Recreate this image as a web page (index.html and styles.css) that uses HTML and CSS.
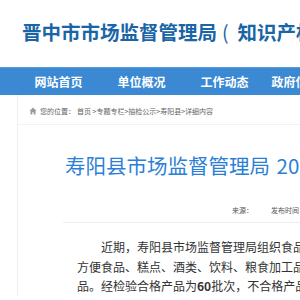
FILE: index.html
```html
<!DOCTYPE html>
<html lang="zh-CN">
<head>
    <meta charset="UTF-8">
    <meta name="viewport" content="width=device-width, initial-scale=1.0">
    <title>寿阳县市场监督管理局 详细内容</title>
    <link rel="stylesheet" href="styles.css">
</head>
<body>
    <!-- Header -->
    <header class="site-header">
        <h1 class="site-title">晋中市市场监督管理局<span class="paren">(</span>知识产权局)</h1>
    </header>

    <!-- Main Nav -->
    <nav class="main-nav">
        <ul>
            <li><a href="#">网站首页</a></li>
            <li><a href="#">单位概况</a></li>
            <li><a href="#">工作动态</a></li>
            <li><a href="#">政府信息公开</a></li>
        </ul>
    </nav>

    <!-- Page -->
    <div class="page">
        <div class="crumbs">
            <svg class="home-icon" width="8" height="8" viewBox="0 0 8 8">
                <path d="M4 0.5 L0.5 4 H1.5 V7.5 H3.3 V5.3 H4.7 V7.5 H6.5 V4 H7.5 Z" fill="#9a9a9a"/>
            </svg>
            <span>您的位置：</span>
            <a class="crumb-home" href="#">首页</a>
            <span>&nbsp;&gt;<a href="#">专题专栏</a>&gt;<a href="#">抽检公示</a>&gt;<a href="#">寿阳县</a>&gt;详细内容</span>
        </div>

        <article class="article">
            <h2 class="article-title">寿阳县市场监督管理局 2021年食品安全监督抽检信息公告</h2>
            <div class="article-meta">
                <span>来源：</span>
                <span>发布时间：2021-08-20</span>
            </div>
            <div class="article-body">
                <p>近期，寿阳县市场监督管理局组织食品安全监督抽检，抽检食用农产品、茶叶、方便食品、糕点、酒类、饮料、粮食加工品、蔬菜制品、冷冻饮品、食糖、炒货等食品。经检验合格产品为<b>60</b>批次，不合格产品为0批次。</p>
            </div>
        </article>
    </div>
</body>
</html>
```

FILE: styles.css
```css
* {
    margin: 0;
    padding: 0;
    box-sizing: border-box;
}

body {
    font-family: "Noto Sans CJK SC", "Noto Sans", sans-serif;
    background: #fff;
    overflow: hidden;
    white-space: nowrap;
}

a {
    color: inherit;
    text-decoration: none;
}

/* Header */
.site-header {
    height: 67px;
    padding: 22px 0 0 22px;
}

.site-title {
    font-size: 19.5px;
    line-height: 20px;
    font-weight: bold;
    color: #1a65a6;
}

.site-title .paren {
    margin: 0 9px 0 5px;
    font-weight: normal;
}

/* Main Nav */
.main-nav {
    height: 28px;
    background: #3b88d3;
    border-top: 1px solid #5a9bdc;
    padding-left: 17px;
}

.main-nav ul {
    list-style: none;
    display: flex;
    height: 100%;
}

.main-nav li {
    flex: 0 0 83px;
    display: flex;
    align-items: center;
    justify-content: center;
}

.main-nav a {
    font-size: 12px;
    font-weight: bold;
    color: #fff;
}

/* Page */
.page {
    margin-left: 17px;
    border-left: 1px solid #f0f0f0;
}

.crumbs {
    height: 30px;
    padding: 3px 0 0 11px;
    display: flex;
    align-items: center;
    font-size: 7px;
    color: #666;
    border-bottom: 1px solid #f2f2f2;
}

.home-icon {
    margin-right: 3px;
}

.crumb-home {
    margin-left: 2px;
}

/* Article */
.article {
    margin-left: 45px;
}

.article-title {
    margin-top: 25px;
    padding-left: 2px;
    font-size: 20.5px;
    line-height: 30px;
    font-weight: normal;
    color: #2b7fd6;
    word-spacing: 2px;
}

.article-meta {
    margin-top: 24px;
    padding: 0 0 6px 169px;
    display: flex;
    gap: 18px;
    font-size: 7px;
    line-height: 12px;
    color: #555;
    border-bottom: 1px solid #eee;
}

.article-body {
    margin-top: 14px;
    padding-left: 14px;
    width: 459px;
    white-space: normal;
}

.article-body p {
    font-size: 12px;
    line-height: 19.5px;
    color: #333;
    text-indent: 2em;
}
```
